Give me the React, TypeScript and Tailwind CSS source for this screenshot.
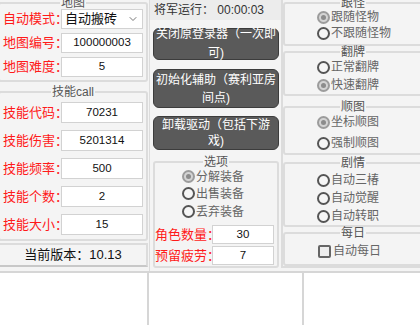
import { ChevronDown } from 'lucide-react'
import type { ReactNode } from 'react'

// group box drawn with a native fieldset so the legend cuts the border
function Group({ title, className = '', children }: { title: string; className?: string; children: ReactNode }) {
  return (
    <fieldset className={`border-2 border-[#dcdcdc] rounded-[3px] min-w-0 ${className}`}>
      <legend className="mx-auto px-[1px] text-[12px] leading-[12px] text-[#555]">{title}</legend>
      {children}
    </fieldset>
  )
}

function Field({ value, className = '' }: { value: string; className?: string }) {
  return (
    <div className={`bg-white border border-[#d2d2d2] flex items-center justify-center text-[11.5px] text-[#111] ${className}`}>
      {value}
    </div>
  )
}

function Radio({ label, checked = false }: { label: string; checked?: boolean }) {
  return (
    <div className="flex items-center gap-[1px] text-[12px] text-[#666]">
      {checked ? (
        <span className="w-[13px] h-[13px] rounded-full border-2 border-[#9c9c9c] bg-[#d4d4d4] flex items-center justify-center">
          <span className="w-[5px] h-[5px] rounded-full bg-[#8c8c8c]" />
        </span>
      ) : (
        <span className="w-[13px] h-[13px] rounded-full border-2 border-[#555] bg-[#f6f6f6]" />
      )}
      <span>{label}</span>
    </div>
  )
}

function LeftRow({ label, value }: { label: string; value: string }) {
  return (
    <div className="flex items-center h-[21px]">
      <span className="w-[61px] pl-[3px] text-[13px] text-[#ff1a1a] whitespace-nowrap">{label}</span>
      <Field value={value} className="w-[82px] h-full" />
    </div>
  )
}

export default function App() {
  return (
    <div className="w-[420px] h-[325px] overflow-hidden bg-white font-['Liberation_Sans','Noto_Sans_CJK_SC',sans-serif]">
      <div className="h-[271px] flex bg-[#f4f4f4] overflow-hidden">
        {/* left column */}
        <div className="w-[148px] flex flex-col shrink-0">
          <Group title="地图" className="-mt-[3px] -ml-[2px] w-[150px] pb-[3px]">
            <div className="flex flex-col gap-[4px]">
              <div className="flex items-center h-[20px]">
                <span className="w-[61px] pl-[3px] text-[13px] text-[#ff1a1a] whitespace-nowrap">自动模式：</span>
                <div className="w-[82px] h-full bg-white border border-[#d2d2d2] flex items-center justify-between pl-[3px] text-[13px] text-[#111]">
                  <span>自动搬砖</span>
                  <ChevronDown size={12} strokeWidth={2} className="text-[#777] mr-[3px]" />
                </div>
              </div>
              <div className="flex items-center h-[20px]">
                <span className="w-[61px] pl-[3px] text-[13px] text-[#ff1a1a] whitespace-nowrap">地图编号：</span>
                <Field value="100000003" className="w-[82px] h-full" />
              </div>
              <div className="flex items-center h-[20px]">
                <span className="w-[61px] pl-[3px] text-[13px] text-[#ff1a1a] whitespace-nowrap">地图难度：</span>
                <Field value="5" className="w-[82px] h-full" />
              </div>
            </div>
          </Group>
          <Group title="技能call" className="mt-[4px] -ml-[2px] w-[150px] pt-[4px] pb-[4px]">
            <div className="flex flex-col gap-[7px]">
              <LeftRow label="技能代码：" value="70231" />
              <LeftRow label="技能伤害：" value="5201314" />
              <LeftRow label="技能频率：" value="500" />
              <LeftRow label="技能个数：" value="2" />
              <LeftRow label="技能大小：" value="15" />
            </div>
          </Group>
          <div className="mt-[2px] -ml-[2px] w-[150px] h-[24px] border-2 border-[#dcdcdc] border-b-[#c8c8c8] flex items-center justify-center text-[13px] text-[#111]">
            当前版本：10.13
          </div>
        </div>

        {/* middle column */}
        <div className="w-[132px] shrink-0 flex flex-col pl-[3px] pr-[2px] border-l border-[#dcdcdc] ml-[1px]">
          <div className="h-[20px] -ml-[3px] -mr-[2px] pl-[4px] bg-[#ececec] flex items-center text-[12px] text-[#333]">
            将军运行：&nbsp;00:00:03
          </div>
          <button className="mt-[8px] h-[32px] rounded-[6px] bg-[#5a5a5a] border border-[#3c3c3c] text-white text-[12px] leading-[19px] flex flex-col items-center justify-center overflow-visible">
            <span>关闭原登录器（一次即</span>
            <span>可)</span>
          </button>
          <button className="mt-[9px] h-[39px] rounded-[6px] bg-[#5a5a5a] border border-[#3c3c3c] text-white text-[12px] leading-[18px] flex flex-col items-center justify-center">
            <span>初始化辅助（赛利亚房</span>
            <span>间点)</span>
          </button>
          <button className="mt-[8px] h-[34px] rounded-[6px] bg-[#5a5a5a] border border-[#3c3c3c] text-white text-[12px] leading-[16px] flex flex-col items-center justify-center">
            <span>卸载驱动（包括下游</span>
            <span>戏)</span>
          </button>
          <Group title="选项" className="mt-[6px] pb-[1px]">
            <div className="flex flex-col pl-[27px]">
              <div className="h-[17px] flex items-center"><Radio label="分解装备" checked /></div>
              <div className="h-[17px] flex items-center"><Radio label="出售装备" /></div>
              <div className="h-[17px] flex items-center mt-[1px]"><Radio label="丢弃装备" /></div>
            </div>
            <div className="flex flex-col gap-[2px] mt-[5px]">
              <div className="flex items-center h-[19px]">
                <span className="w-[57px] text-[13px] text-[#ff1a1a] whitespace-nowrap">角色数量：</span>
                <Field value="30" className="w-[62px] h-full" />
              </div>
              <div className="flex items-center h-[19px]">
                <span className="w-[57px] text-[13px] text-[#ff1a1a] whitespace-nowrap">预留疲劳：</span>
                <Field value="7" className="w-[62px] h-full" />
              </div>
            </div>
          </Group>
        </div>

        {/* right column */}
        <div className="flex-1 flex flex-col border-l-2 border-[#dcdcdc] h-[268px] border-b-2">
          <Group title="跟怪" className="-mt-[3px] w-[140px] pb-[3px]">
            <div className="flex flex-col pl-[32px]">
              <div className="h-[16px] flex items-center"><Radio label="跟随怪物" checked /></div>
              <div className="h-[16px] flex items-center"><Radio label="不跟随怪物" /></div>
            </div>
          </Group>
          <Group title="翻牌" className="w-[140px]">
            <div className="flex flex-col pl-[32px]">
              <div className="h-[18px] flex items-center"><Radio label="正常翻牌" /></div>
              <div className="h-[18px] flex items-center"><Radio label="快速翻牌" checked /></div>
            </div>
          </Group>
          <Group title="顺图" className="mt-[5px] w-[140px] pb-[1px]">
            <div className="flex flex-col gap-[3px] pl-[32px]">
              <div className="h-[18px] flex items-center"><Radio label="坐标顺图" checked /></div>
              <div className="h-[18px] flex items-center"><Radio label="强制顺图" /></div>
            </div>
          </Group>
          <Group title="剧情" className="mt-[2px] w-[140px] pt-[2px]">
            <div className="flex flex-col pl-[32px]">
              <div className="h-[18px] flex items-center"><Radio label="自动三椿" /></div>
              <div className="h-[18px] flex items-center"><Radio label="自动觉醒" /></div>
              <div className="h-[18px] flex items-center"><Radio label="自动转职" /></div>
            </div>
          </Group>
          <Group title="每日" className="w-[140px] pt-[3px] flex-1">
            <div className="pl-[33px] h-[18px] flex items-center gap-[2px] text-[12px] text-[#666]">
              <span className="w-[13px] h-[13px] rounded-[2px] border-2 border-[#666] bg-[#eeeeee]" />
              <span>自动每日</span>
            </div>
          </Group>
        </div>
      </div>

      {/* bottom blank panes */}
      <div className="h-[54px] flex border-t-2 border-[#d6d6d6] bg-white">
        <div className="w-[149px] border-r-2 border-[#d6d6d6]" />
        <div className="w-[155px] border-r-2 border-[#d6d6d6]" />
        <div className="flex-1" />
      </div>
    </div>
  )
}
